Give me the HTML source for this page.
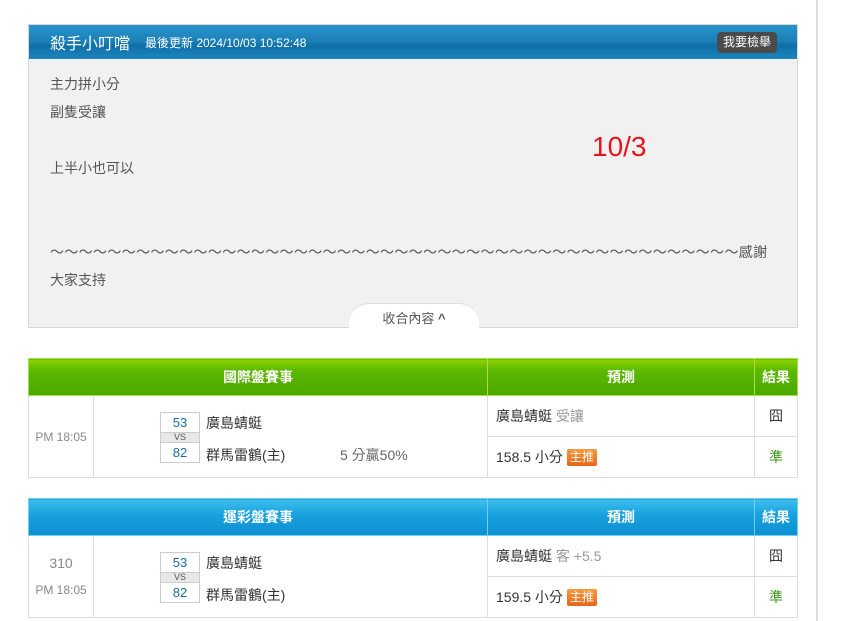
<!DOCTYPE html>
<html><head><meta charset="utf-8"><style>
*{margin:0;padding:0;box-sizing:border-box}
body{width:844px;height:621px;background:#fff;position:relative;overflow:hidden;font-family:"Liberation Sans","Noto Sans CJK TC",sans-serif;}
.vl{position:absolute;left:816px;top:0;width:2px;height:621px;background:#ddd}
.panel{position:absolute;left:28px;top:24px;width:770px;height:304px;background:#f1f1f1;border:1px solid #d6d6d6}
.ph{height:34px;background:linear-gradient(#2a95cb,#1a7fb6 50%,#0f6ea6 60%,#1d86bf);color:#fff;position:relative}
.ph .t{position:absolute;left:21px;top:5px;font-size:16px}
.ph .d{position:absolute;left:116px;top:9px;font-size:12px}
.ph .b{position:absolute;right:20px;top:7px;width:60px;height:21px;background:#4b4b4b;border-radius:4px;font-size:12px;line-height:21px;text-align:center}
.txt{position:absolute;left:21px;font-size:14px;color:#555}
.red{position:absolute;left:563px;top:106px;font-size:28px;color:#e8141c}
.tab{position:absolute;left:320px;top:278px;width:130px;height:26px;background:#fff;border-radius:20px 20px 0 0;border-top:1px solid #ddd;font-size:13px;color:#555;text-align:center;line-height:30px}
table{position:absolute;left:28px;width:769px;border-collapse:collapse;font-size:14px;table-layout:fixed}
td,th{border:1px solid #ddd}
th{color:#fff;font-size:14px;height:37px;font-weight:bold}
.g th{background:linear-gradient(#8fd400,#5cb800 30%,#4aa800);border-color:#a6df4a}
.bl th{background:linear-gradient(#3fc0ee,#18a2de 40%,#0d8fd0);border-color:#72cff2}
td{height:41px;color:#333}
.tm{text-align:center;color:#888;font-size:12px}
.sc{position:absolute;width:40px;border:1px solid #ccc;font-size:13px;color:#1a6aa8;text-align:center}
.badge{display:inline-block;background:linear-gradient(#f89a3c,#e8651a);color:#fff;font-size:12px;padding:0 3px;line-height:17px;border-radius:2px;vertical-align:1px}
</style></head><body>
<div class="vl"></div>
<div class="panel">
<div class="ph"><span class="t">殺手小叮噹</span><span class="d">最後更新 2024/10/03 10:52:48</span><span class="b">我要檢舉</span></div>
<div class="txt" style="top:49px">主力拼小分</div>
<div class="txt" style="top:77px">副隻受讓</div>
<div class="txt" style="top:133px">上半小也可以</div>
<div class="red">10/3</div>
<div class="txt" style="top:217px;letter-spacing:0.35px;white-space:nowrap">～～～～～～～～～～～～～～～～～～～～～～～～～～～～～～～～～～～～～～～～～～～～～～～～感謝</div>
<div class="txt" style="top:245px">大家支持</div>
<div class="tab">收合內容 <b>^</b></div>
</div>

<table class="g" style="top:358px">
<colgroup><col style="width:65px"><col style="width:394px"><col style="width:267px"><col style="width:43px"></colgroup>
<tr><th colspan="2">國際盤賽事</th><th>預測</th><th>結果</th></tr>
<tr><td rowspan="2" class="tm">PM 18:05</td><td rowspan="2" style="position:relative">
<div class="sc" style="left:66px;top:16px;height:21px;line-height:19px">53</div>
<div class="sc" style="left:66px;top:36px;height:11px;line-height:9px;font-size:9px;color:#555;background:#e8e8e8">VS</div>
<div class="sc" style="left:66px;top:46px;height:21px;line-height:19px">82</div>
<span style="position:absolute;left:112px;top:17px">廣島蜻蜓</span>
<span style="position:absolute;left:112px;top:49px">群馬雷鶴(主)</span>
<span style="position:absolute;left:246px;top:49px;color:#666">5 分贏50%</span>
</td><td style="padding-left:8px">廣島蜻蜓 <span style="color:#999">受讓</span></td><td style="text-align:center">囧</td></tr>
<tr><td style="padding-left:8px">158.5 小分 <span class="badge">主推</span></td><td style="text-align:center;color:#3a9a1a">準</td></tr>
</table>

<table class="bl" style="top:498px">
<colgroup><col style="width:65px"><col style="width:394px"><col style="width:267px"><col style="width:43px"></colgroup>
<tr><th colspan="2">運彩盤賽事</th><th>預測</th><th>結果</th></tr>
<tr><td rowspan="2" class="tm" style="line-height:26px"><span style="font-size:14px">310</span><br>PM 18:05</td><td rowspan="2" style="position:relative">
<div class="sc" style="left:66px;top:16px;height:21px;line-height:19px">53</div>
<div class="sc" style="left:66px;top:36px;height:11px;line-height:9px;font-size:9px;color:#555;background:#e8e8e8">VS</div>
<div class="sc" style="left:66px;top:46px;height:21px;line-height:19px">82</div>
<span style="position:absolute;left:112px;top:17px">廣島蜻蜓</span>
<span style="position:absolute;left:112px;top:49px">群馬雷鶴(主)</span>
</td><td style="padding-left:8px">廣島蜻蜓 <span style="color:#999">客 +5.5</span></td><td style="text-align:center">囧</td></tr>
<tr><td style="padding-left:8px">159.5 小分 <span class="badge">主推</span></td><td style="text-align:center;color:#3a9a1a">準</td></tr>
</table>
</body></html>
